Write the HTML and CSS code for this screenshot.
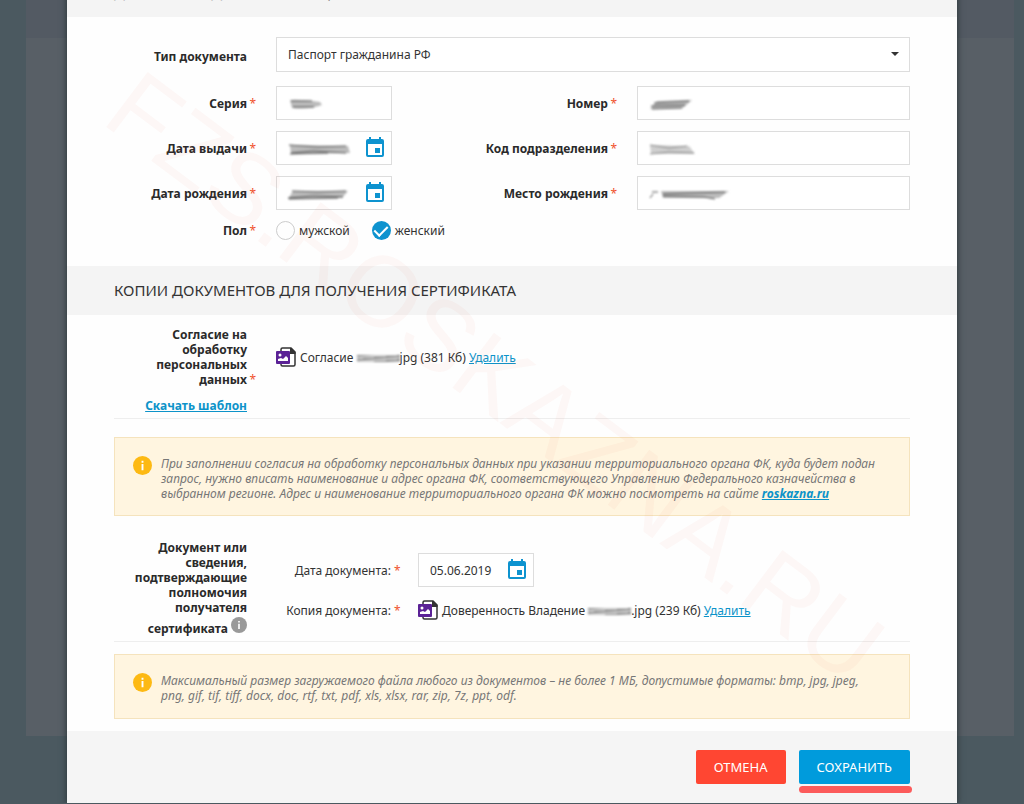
FILE: index.html
```html
<!DOCTYPE html>
<html lang="ru">
<head>
  <meta charset="UTF-8" />
  <meta name="viewport" content="width=device-width, initial-scale=1.0" />
  <title>Запрос на сертификат</title>
  <link rel="stylesheet" href="styles.css">
</head>
<body>
  <!-- Затемнённая страница под окном -->
  <div class="backdrop"><div class="backdrop-head"></div></div>

  <svg class="sprite" width="0" height="0" aria-hidden="true">
    <symbol id="calendar" viewBox="0 0 18 20">
      <path fill="#0e93cf" fill-rule="evenodd" d="M3 0h2v2h8V0h2v2h1a2 2 0 0 1 2 2v14a2 2 0 0 1-2 2H2a2 2 0 0 1-2-2V4a2 2 0 0 1 2-2h1zM2 7v11h14V7zM9 11h5v5H9z"/>
    </symbol>
    <symbol id="image-file" viewBox="0 0 20 20">
      <path d="M5 4V2.500Q5 1 6.500 1H15l4 4v12.500q0 1.500-1.500 1.500h-11Q5 19 5 17.500V16" fill="#fff" stroke="#333" stroke-width="1.500"/>
      <path d="M14 1h1.500L19.500 5v2H14z" fill="#333"/>
      <rect y="4" width="14" height="13" rx="1" fill="#5b2296"/>
      <circle cx="4" cy="8" r="1.500" fill="#fff"/>
      <path d="M2 14v-2l3-1 2 1 3-3 2 2v3z" fill="#fff"/>
    </symbol>
    <symbol id="info" viewBox="0 0 20 20">
      <circle cx="10" cy="10" r="10" fill="currentColor"/>
      <path d="M9 5h2v2H9zM9 8.500h2V15H9z" fill="#fff"/>
    </symbol>
  </svg>

  <form class="modal">
    <h2 class="section-title">ДОКУМЕНТ, УДОСТОВЕРЯЮЩИЙ ЛИЧНОСТЬ</h2>

    <section class="person">
      <label class="label" for="docType">Тип документа<i class="star"></i></label>
      <div class="select-wrap">
        <select id="docType">
          <option>Паспорт гражданина РФ</option>
        </select>
      </div>

      <label class="label" for="series">Серия<i class="star">*</i></label>
      <div class="field">
        <input type="text" id="series">
        <svg class="smudge" width="36" height="12"><path d="M2 1Q12 0 32 3L34 6Q20 11 4 9Z"/><path class="dark" d="M3 2L24 2M5 8L26 8"/></svg>
      </div>
      <label class="label" for="number">Номер<i class="star">*</i></label>
      <div class="field">
        <input type="text" id="number">
        <svg class="smudge" width="44" height="12"><path d="M8 2L43 1L34 9L1 10Z"/><path class="dark" d="M5 4L40 2M2 7L36 6M3 10L33 9"/></svg>
      </div>

      <label class="label" for="issued">Дата выдачи<i class="star">*</i></label>
      <div class="field">
        <input type="text" id="issued">
        <svg class="smudge" width="64" height="12"><path d="M2 1L60 2L62 9L3 10Z"/><path class="dark" d="M1 1L30 3L58 2M3 9L25 7L58 9M2 10L40 9"/></svg>
        <button type="button" class="calendar" aria-label="Выбрать дату"><svg><use href="#calendar"/></svg></button>
      </div>
      <label class="label" for="code">Код подразделения<i class="star">*</i></label>
      <div class="field">
        <input type="text" id="code">
        <svg class="smudge light" width="48" height="12"><path d="M1 1L40 2L46 10L2 10Z"/><path class="dark" d="M1 1L20 4L38 2M1 10L20 8L45 9"/></svg>
      </div>

      <label class="label" for="birth">Дата рождения<i class="star">*</i></label>
      <div class="field">
        <input type="text" id="birth">
        <svg class="smudge" width="64" height="12"><path d="M5 2L60 2L54 9L0 10Z"/><path class="dark" d="M4 2L30 3L58 2M0 9L25 7L55 8M1 10L50 9"/></svg>
        <button type="button" class="calendar" aria-label="Выбрать дату"><svg><use href="#calendar"/></svg></button>
      </div>
      <label class="label" for="place">Место рождения<i class="star">*</i></label>
      <div class="field">
        <input type="text" id="place">
        <svg class="smudge" width="82" height="12"><path d="M12 2L80 2L70 9L14 9Z"/><path class="dark" d="M3 3L9 3M1 9L4 5M14 5L76 3M14 7L55 8L66 10"/></svg>
      </div>

      <span class="label">Пол<i class="star">*</i></span>
      <div class="gender">
        <label><input type="radio" name="gender">мужской</label>
        <label><input type="radio" name="gender" checked>женский</label>
      </div>
    </section>

    <h2 class="section-title">КОПИИ ДОКУМЕНТОВ ДЛЯ ПОЛУЧЕНИЯ СЕРТИФИКАТА</h2>

    <section class="copies">
      <div class="doc-row">
        <div class="doc-label">
          <p>Согласие на обработку персональных данных<i class="star">*</i></p>
          <a href="#" class="template">Скачать шаблон</a>
        </div>
        <div class="file file-consent">
          <svg class="file-icon"><use href="#image-file"/></svg>
          <span>Согласие <span class="blurred"></span>jpg (381 Кб) <a href="#">Удалить</a></span>
        </div>
      </div>

      <div class="note">
        <svg class="info"><use href="#info"/></svg>
        <p>При заполнении согласия на обработку персональных данных при указании территориального органа ФК, куда будет подан запрос, нужно вписать наименование и адрес органа ФК, соответствующего Управлению Федерального казначейства в выбранном регионе. Адрес и наименование территориального органа ФК можно посмотреть на сайте <a href="#">roskazna.ru</a></p>
      </div>

      <div class="doc-row doc-row-power">
        <div class="doc-label">
          <p>Документ или сведения, подтверждающие полномочия получателя <span class="last-line">сертификата <svg class="hint"><use href="#info"/></svg></span></p>
        </div>
        <div class="doc-fields">
          <label for="docDate">Дата документа: <i class="star">*</i></label>
          <div class="field field-date">
            <input type="text" id="docDate" value="05.06.2019">
            <button type="button" class="calendar" aria-label="Выбрать дату"><svg><use href="#calendar"/></svg></button>
          </div>
          <span>Копия документа: <i class="star">*</i></span>
          <div class="file">
            <svg class="file-icon"><use href="#image-file"/></svg>
            <span>Доверенность Владение <span class="blurred"></span>.jpg (239 Кб) <a href="#">Удалить</a></span>
          </div>
        </div>
      </div>

      <div class="note note-size">
        <svg class="info"><use href="#info"/></svg>
        <p>Максимальный размер загружаемого файла любого из документов – не более 1 МБ, допустимые форматы: bmp, jpg, jpeg, png, gif, tif, tiff, docx, doc, rtf, txt, pdf, xls, xlsx, rar, zip, 7z, ppt, odf.</p>
      </div>
    </section>

    <footer class="actions">
      <button type="button" class="btn btn-cancel">ОТМЕНА</button>
      <button type="submit" class="btn btn-save">СОХРАНИТЬ</button>
    </footer>

    <div class="watermark" aria-hidden="true">FZS.ROSKAZNA.RU</div>
  </form>
</body>
</html>
```
FILE: styles.css
```css
* {
  box-sizing: border-box;
}

body {
  margin: 0;
  padding: 0 67px;
  background: #4b5960;
  color: #333;
  font-family: "Noto Sans", "Open Sans", sans-serif;
  font-size: 12px;
  line-height: 15px;
  overflow: hidden;
}

p, h2 {
  margin: 0;
}

a {
  color: #0d93c9;
}

.sprite {
  position: absolute;
}

.backdrop {
  position: absolute;
  top: 0;
  left: 26px;
  right: 10px;
  height: 736px;
  background: #585f66;
}

.backdrop-head {
  height: 38px;
  background: #535a63;
}

/* Окно прокручено: первый заголовок уходит за верхний край */
.modal {
  position: relative;
  margin-top: -32px;
  background: #fefefe;
  box-shadow: 0 0 6px 1px #2f393d;
  overflow: hidden;
}

/* Заголовки разделов */
.section-title {
  padding: 14px 47px;
  background: #f4f4f4;
  font-size: 15px;
  font-weight: 400;
  line-height: 21px;
}

/* Данные документа */
.person {
  display: grid;
  grid-template-columns: 142px 116px 1fr 273px;
  column-gap: 20px;
  row-gap: 11px;
  align-items: center;
  padding: 20px 47px 26px;
}

.label {
  color: #2a2a2a;
  font-weight: 700;
  text-align: right;
}

.star {
  display: inline-block;
  width: 9px;
  color: #f0522d;
  font-style: normal;
  font-weight: 400;
  text-align: right;
}

.select-wrap {
  position: relative;
  grid-column: 2 / 5;
  margin-bottom: 3px;
}

.select-wrap::after {
  content: "";
  position: absolute;
  top: 15px;
  right: 11px;
  border: 4px solid transparent;
  border-top-color: #333;
  border-bottom: 0;
}

select, input[type="text"] {
  width: 100%;
  height: 34px;
  padding: 0 11px;
  border: 1px solid #ddd;
  border-radius: 0;
  background: #fff;
  color: #333;
  font: inherit;
  appearance: none;
}

select {
  display: block;
  height: 35px;
}

.field {
  position: relative;
  display: flex;
}

.calendar {
  position: absolute;
  top: 6px;
  right: 8px;
  width: 18px;
  height: 20px;
  padding: 0;
  border: 0;
  background: none;
}

.calendar svg {
  display: block;
  width: 18px;
  height: 20px;
}

.smudge {
  position: absolute;
  top: 13px;
  left: 12px;
  fill: #bbb;
  filter: blur(1px);
}

.smudge .dark {
  fill: none;
  stroke: #555;
}

.smudge.light {
  opacity: 0.7;
}

.gender {
  grid-column: 2 / 5;
  display: flex;
  gap: 22px;
}

.gender label {
  display: flex;
  align-items: center;
  gap: 4px;
}

.gender input {
  appearance: none;
  width: 19px;
  height: 19px;
  margin: 0;
  border: 1px solid #ccc;
  border-radius: 50%;
}

.gender input:checked {
  display: flex;
  justify-content: center;
  border: 0;
  background: #0e93cf;
}

.gender input:checked::after {
  content: "";
  width: 6px;
  height: 11px;
  margin-top: 2px;
  border: solid #fff;
  border-width: 0 2px 2px 0;
  transform: rotate(45deg);
}

/* Копии документов */
.copies {
  padding: 12px 47px;
}

.doc-row {
  display: flex;
  gap: 29px;
  padding-bottom: 5px;
  border-bottom: 1px solid #eee;
}

.doc-label {
  width: 133px;
  color: #2a2a2a;
  font-weight: 700;
  text-align: right;
}

.doc-label p {
  padding-left: 12px;
}

.doc-label .star {
  margin-right: -9px;
}

.template {
  display: block;
  margin-top: 11px;
}

.file {
  display: flex;
  align-items: center;
  gap: 4px;
}

.file-consent {
  align-self: flex-start;
  margin-top: 20px;
}

.file-icon {
  width: 20px;
  height: 20px;
}

.blurred {
  display: inline-block;
  width: 43px;
  height: 7px;
  background: repeating-linear-gradient(175deg, #888 0 1px, #ccc 2px 4px);
  filter: blur(1px);
}

.note {
  display: flex;
  gap: 9px;
  margin-top: 18px;
  padding: 18px 28px 14px 18px;
  border: 1px solid #f5e3bd;
  background: #fff5e0;
  color: #777;
  font-style: italic;
}

.note a {
  font-weight: 700;
}

.info {
  flex: none;
  width: 19px;
  height: 19px;
  color: #fdb913;
}

.doc-row-power {
  margin-top: 24px;
}

.doc-row-power p {
  padding-left: 0;
}

.last-line {
  display: block;
  margin-top: 2px;
}

.hint {
  width: 16px;
  height: 16px;
  color: #999;
}

.doc-fields {
  flex: 1;
  display: grid;
  grid-template-columns: 124px 1fr;
  align-content: start;
  align-items: center;
  gap: 13px 18px;
  padding-top: 13px;
  text-align: right;
}

.doc-fields .star {
  width: 6px;
}

.field-date {
  width: 116px;
}

.note-size {
  margin-top: 12px;
  padding-bottom: 15px;
}

.actions {
  display: flex;
  justify-content: flex-end;
  gap: 13px;
  padding: 19px 47px;
  background: #f5f5f5;
}

.btn {
  height: 34px;
  padding: 0 18px;
  border: 0;
  border-radius: 2px;
  color: #fff;
  font: inherit;
  font-size: 13px;
}

.btn-cancel {
  background: #ff4632;
}

.btn-save {
  position: relative;
  background: #009bdc;
}

.btn-save::after {
  content: "";
  position: absolute;
  top: 36px;
  left: 0;
  right: -2px;
  height: 7px;
  border-radius: 4px;
  background: #fc5b5b;
}

.watermark {
  position: absolute;
  top: 86px;
  left: 84px;
  color: rgba(240, 80, 60, 0.04);
  font-family: "Liberation Sans", sans-serif;
  font-size: 100px;
  line-height: 100px;
  transform: rotate(37deg);
  transform-origin: 0 0;
  pointer-events: none;
}
```
